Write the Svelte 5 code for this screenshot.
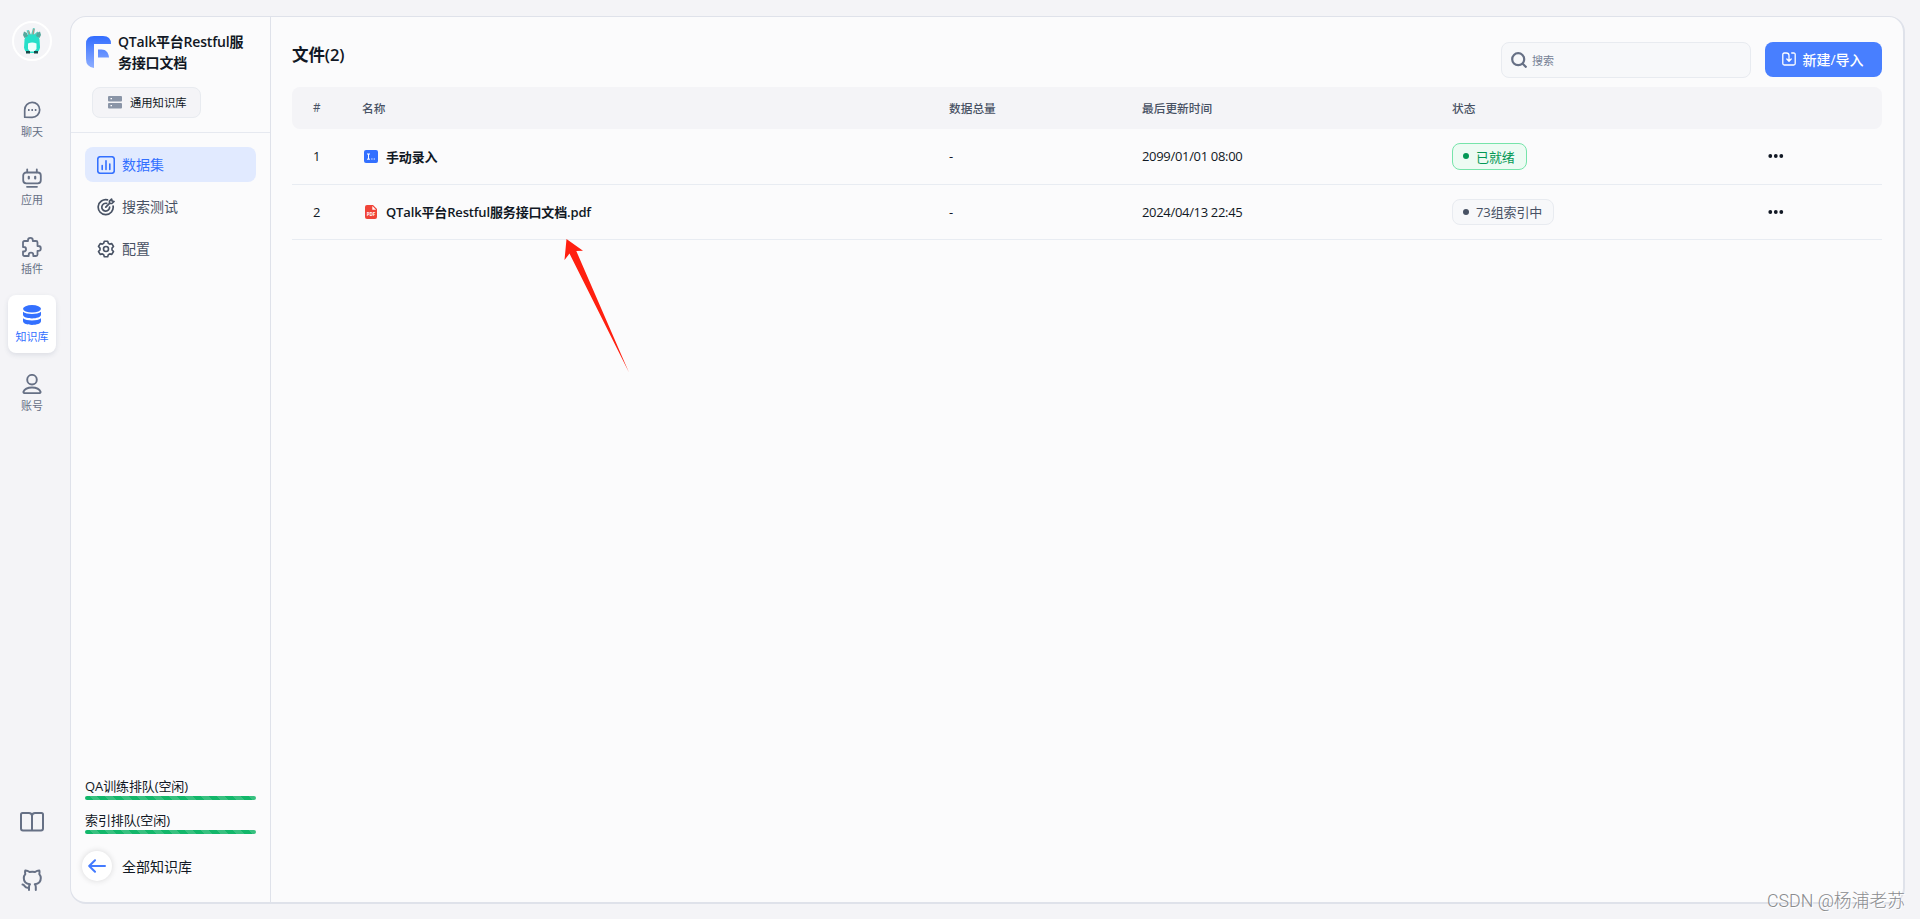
<script lang="ts">
    const navs = [
        { name: "聊天", icon: "chat" },
        { name: "应用", icon: "app" },
        { name: "插件", icon: "plugin" },
        { name: "知识库", icon: "dataset", active: true },
        { name: "账号", icon: "me" },
    ];

    const tabs = [
        { name: "数据集", icon: "chart", active: true },
        { name: "搜索测试", icon: "target" },
        { name: "配置", icon: "gear" },
    ];

    const queues = ["QA训练排队(空闲)", "索引排队(空闲)"];

    const files = [
        { name: "手动录入", type: "manual", total: "-", time: "2099/01/01 08:00", status: "已就绪", ready: true },
        { name: "QTalk平台Restful服务接口文档.pdf", type: "pdf", total: "-", time: "2024/04/13 22:45", status: "73组索引中", ready: false },
    ];
</script>

<div class="page">
    <nav class="rail">
        <div class="avatar">
            <svg viewBox="0 0 20 28" width="20" height="28">
                <path d="M7 10 4.500 3.500 7 3l2 5 2-7 2 .5-1 6 3.500-3 1.500 2-3 4.500z" fill="#54cfc0" />
                <path d="m6.500 4 2 5M12 2l-1 6" stroke="#d8806f" stroke-width=".8" />
                <path d="M6 7.500h8q2.500 1 3.500 5l.5 8q-.5 4-4 5.500H6q-3.500-1.500-4-5.500l.5-8q1-4 3.500-5z" fill="#27dfc9" />
                <path d="M2 4.500l3 1.500 1 3-3.500 2L1 8zM18 4.500 15 6l-1 3 3.500 2L19 8z" fill="#55a89d" />
                <path d="M6 16.500q4-2 8.500 0V22L12 24.500H8L6 22z" fill="#edfffc" />
                <path d="M4 24h4v2.500H4zM12 24h4v2.500h-4z" fill="#164a49" />
            </svg>
        </div>

        {#each navs as item}
            <div class="nav" class:active={item.active}>
                {#if item.icon === "chat"}
                    <svg viewBox="0 0 20 20" width="20" height="20" fill="none" stroke="currentColor" stroke-width="1.700">
                        <path d="M2.700 17.200V10a7.500 7.500 0 1 1 7.500 7.300z" stroke-linejoin="round" />
                        <path d="M6 10h1.600M9.400 10H11M12.800 10h1.600" stroke-width="1.800" />
                    </svg>
                {:else if item.icon === "app"}
                    <svg viewBox="0 0 20 20" width="20" height="20" fill="none" stroke="currentColor" stroke-width="1.800" stroke-linecap="round">
                        <rect x="1.200" y="4.500" width="17.600" height="10.800" rx="3" />
                        <path d="M5.200 1.300v3M14.800 1.300v3M5 18.800h10" />
                        <path d="M6.800 8.800v1.600M13.200 8.800v1.600" stroke-width="2.200" />
                    </svg>
                {:else if item.icon === "plugin"}
                    <svg viewBox="0 0 20 20" width="20" height="20" fill="none" stroke="currentColor" stroke-width="1.800" stroke-linejoin="round">
                        <path d="M1 5.500q0-1.500 1.500-1.500H6v-.7a2.400 2.400 0 0 1 4.800 0V4H14q1.500 0 1.500 1.500V9h.9a2.400 2.400 0 0 1 0 4.800h-.9v3.700q0 1.500-1.500 1.500h-2.700v-1a2.300 2.300 0 0 0-4.600 0v1H2.500Q1 19 1 17.500v-3h.8a2.200 2.200 0 0 0 0-4.500H1z" />
                    </svg>
                {:else if item.icon === "dataset"}
                    <svg viewBox="0 0 20 20" width="20" height="20" fill="currentColor">
                        <ellipse cx="10" cy="3.800" rx="9" ry="3.700" />
                        <path d="M1 6.800c3.500 3 14.500 3 18 0v2.800c0 5.200-18 5.200-18 0z" />
                        <path d="M1 13.200c3.500 3 14.500 3 18 0v2.900c0 5.200-18 5.200-18 0z" />
                    </svg>
                {:else}
                    <svg viewBox="0 0 20 20" width="20" height="20" fill="none" stroke="currentColor" stroke-width="1.900">
                        <circle cx="10" cy="5.700" r="4.800" />
                        <path d="M2.700 19.100c-1 0-1.400-.6-1.200-1.400 2.200-5.700 14.800-5.700 17 0 .2.800-.2 1.400-1.200 1.400z" />
                    </svg>
                {/if}
                <span>{item.name}</span>
            </div>
        {/each}

        <div class="links">
            <svg viewBox="0 0 24 20" width="24" height="20" fill="none" stroke="currentColor" stroke-width="2" stroke-linejoin="round">
                <path d="M12 3.500Q11.500 1 9 1H2.500Q1 1 1 2.500v14Q1 18.500 3 18.500h18q2 0 2-2v-14Q23 1 21.500 1H15q-2.500 0-3 2.500zV18" />
            </svg>
            <svg viewBox="0 0 22 22" width="22" height="22" fill="none" stroke="currentColor" stroke-width="2" stroke-linecap="round" stroke-linejoin="round">
                <path d="M1.500 15.500c2.500.3 2 3.300 5 3.300M8 21v-3c0-1.200.3-2 1-2.700-4-.4-6.200-2.400-6.200-6.200 0-1.600.5-2.900 1.500-4-.4-1.200-.4-2.400 0-3.700 1.500-.1 3 .6 4.300 1.600 1.800-.4 3.700-.4 5.400 0 1.400-1 2.800-1.700 4.300-1.600.4 1.300.4 2.500 0 3.700 1 1.100 1.500 2.400 1.500 4 0 3.800-2.200 5.800-6 6.200.7.700 1 1.500 1 2.700v3" />
            </svg>
        </div>
    </nav>

    <div class="panel">
        <aside>
            <div class="head">
                <div class="title">
                    <svg viewBox="0 0 26 32" width="26" height="32">
                        <defs>
                            <linearGradient id="logo" gradientUnits="userSpaceOnUse" x1="0" y1="0" x2="0" y2="32">
                                <stop offset="0" stop-color="#326dff" />
                                <stop offset="1" stop-color="#8eaeff" />
                            </linearGradient>
                        </defs>
                        <path d="M8 0h9q8 0 8 8H8v24q-8-1-8-9V8q0-8 8-8z" fill="url(#logo)" />
                        <path d="M12 13.500h3.500c4.500 0 7 3 7.500 8H12z" fill="url(#logo)" />
                    </svg>
                    <h1>QTalk平台Restful服务接口文档</h1>
                </div>
                <div class="kind">
                    <svg viewBox="0 0 14 13" width="14" height="13">
                        <rect width="14" height="5.500" rx="1" fill="#8a95a7" />
                        <rect y="7" width="14" height="5.500" rx="1" fill="#8a95a7" />
                        <path d="M2.500 2.700H4M2.500 9.700H4" stroke="#fff" stroke-width="1.300" />
                    </svg>
                    通用知识库
                </div>
            </div>

            <div class="tabs">
                {#each tabs as tab}
                    <div class="tab" class:active={tab.active}>
                        {#if tab.icon === "chart"}
                            <svg viewBox="0 0 18 18" width="18" height="18" fill="none" stroke="currentColor" stroke-width="1.600" stroke-linecap="round">
                                <rect x=".75" y=".75" width="16.500" height="16.500" rx="2.500" />
                                <path d="M5.200 9.500v4M9 4.800v8.700M12.800 8v5.500" />
                            </svg>
                        {:else if tab.icon === "target"}
                            <svg viewBox="0 0 18 18" width="18" height="18" fill="none" stroke="currentColor" stroke-width="1.700" stroke-linecap="round" stroke-linejoin="round">
                                <path d="M10.500 1.900A7.500 7.500 0 1 0 16.100 8" />
                                <path d="M9.700 5.400A3.900 3.900 0 1 0 12.600 9" />
                                <path d="m8.800 9.200 4-4M12.500 5.400V3.200l2.100-2.100.5 1.900 1.900.5L14.900 5.500z" />
                            </svg>
                        {:else}
                            <svg viewBox="0 0 18 18" width="18" height="18" fill="none" stroke="currentColor" stroke-width="1.600" stroke-linejoin="round">
                                <path d="m7.300 1.200h3.400l.6 2.100 1.400.8 2.100-.5 1.700 2.900-1.500 1.600v1.800l1.500 1.600-1.700 2.900-2.100-.5-1.400.8-.6 2.100H7.300l-.6-2.100-1.400-.8-2.100.5-1.700-2.900L3 9.900V8.100L1.500 6.500l1.700-2.900 2.100.5 1.400-.8z" />
                                <circle cx="9" cy="9" r="2.500" />
                            </svg>
                        {/if}
                        <span>{tab.name}</span>
                    </div>
                {/each}
            </div>

            <div class="bottom">
                {#each queues as queue}
                    <div class="queue">
                        <span>{queue}</span>
                        <div class="bar"></div>
                    </div>
                {/each}
                <div class="back">
                    <div class="circle">
                        <svg viewBox="0 0 18 14" width="18" height="14" fill="none" stroke="#447bff" stroke-width="2" stroke-linecap="round" stroke-linejoin="round">
                            <path d="M17 7H1.500M7 1.200 1.200 7 7 12.800" />
                        </svg>
                    </div>
                    全部知识库
                </div>
            </div>
        </aside>

        <main>
            <div class="toolbar">
                <h2>文件(2)</h2>
                <div class="search">
                    <svg viewBox="0 0 16 16" width="16" height="16" fill="none" stroke="#667085" stroke-width="2.200">
                        <circle cx="7.200" cy="7.200" r="6" />
                        <path d="m11.500 11.500 4 4" />
                    </svg>
                    搜索
                </div>
                <button>
                    <svg viewBox="0 0 14 14" width="14" height="14" fill="none" stroke="#fff" stroke-width="1.300" stroke-linecap="round" stroke-linejoin="round">
                        <path d="M4.300 1h-2Q.8 1 .8 2.500v9Q.8 13 2.300 13h9.400q1.500 0 1.500-1.500v-9Q13.200 1 11.700 1h-2M4.300 1Q7 1 7 3.500v5.300M4.800 7 7 9.200 9.200 7" />
                    </svg>
                    <span>新建/导入</span>
                </button>
            </div>

            <div class="row thead">
                <span class="no">#</span>
                <span>名称</span>
                <span>数据总量</span>
                <span>最后更新时间</span>
                <span>状态</span>
            </div>
            {#each files as file, i}
                <div class="row">
                    <span class="no">{i + 1}</span>
                    <span class="file">
                        {#if file.type === "manual"}
                            <svg viewBox="0 0 14 13" width="14" height="13">
                                <rect width="14" height="13" rx="2" fill="#3370ff" />
                                <path d="M3 4h3M3 9.200h3M4.500 4v5M7.300 9h1.200M9.700 9h1.200" stroke="#fff" stroke-width="1" />
                            </svg>
                        {:else}
                            <svg viewBox="0 0 14 14" width="14" height="14">
                                <path d="M3 0h6l4 4v8q0 2-2 2H3q-2 0-2-2V2q0-2 2-2z" fill="#f04438" />
                                <path d="M8.300 1v3.700H12z" fill="#fff" />
                                <text x="7" y="10.800" text-anchor="middle">PDF</text>
                            </svg>
                        {/if}
                        {file.name}
                    </span>
                    <span>{file.total}</span>
                    <span class="time">{file.time}</span>
                    <span><span class="status" class:ready={file.ready}>{file.status}</span></span>
                    <svg viewBox="0 0 16 4" width="16" height="4" fill="#111824">
                        <circle cx="2.300" cy="2" r="1.900" />
                        <circle cx="7.800" cy="2" r="1.900" />
                        <circle cx="13.300" cy="2" r="1.900" />
                    </svg>
                </div>
            {/each}
        </main>
    </div>

    <svg class="arrow" viewBox="0 0 66 134" width="66" height="134">
        <path d="M2.500 0 19 11.800l-6.700.2L65 133.500 5.500 14.600.5 21z" fill="#ff2010" />
    </svg>
    <div class="watermark">CSDN @杨浦老苏</div>
</div>

<style>
    :global(body) {
        background: #f4f4f7;
    }

    .page {
        box-sizing: border-box;
        position: relative;
        display: flex;
        width: 1920px;
        height: 919px;
        padding: 16px 15px 15px 0;
        overflow: hidden;
        color: #111824;
        font-family: "Open Sans", "Noto Sans CJK SC", sans-serif;
        font-size: 13px;
    }

    svg {
        flex-shrink: 0;
    }

    h1, h2 {
        margin: 0;
        font-weight: 600;
    }

    .rail {
        display: flex;
        flex-direction: column;
        align-items: center;
        gap: 10px;
        width: 64px;
        padding-top: 5px;
        margin-right: 6px;
        color: #667085;
    }

    .avatar {
        box-sizing: border-box;
        display: flex;
        align-items: center;
        justify-content: center;
        width: 40px;
        height: 40px;
        margin-bottom: 18px;
        border: 2px solid #fff;
        border-radius: 50%;
    }

    .nav {
        box-sizing: border-box;
        display: flex;
        flex-direction: column;
        align-items: center;
        width: 48px;
        height: 58.500px;
        padding-top: 10.500px;
        border-radius: 8px;
        font-size: 11px;
        line-height: 16px;
    }

    .nav span {
        margin-top: 4px;
    }

    .nav.active {
        background: #fff;
        color: #3370ff;
        box-shadow: 0 2px 5px rgba(50, 65, 100, .12);
    }

    .links {
        display: flex;
        flex-direction: column;
        align-items: center;
        gap: 37px;
        margin-top: auto;
        margin-bottom: 13px;
    }

    .panel {
        box-sizing: border-box;
        display: flex;
        flex: 1;
        border: 1px solid #dfe2ea;
        border-width: 1px 2px 2px 1px;
        border-radius: 16px;
        background: #fbfbfc;
    }

    aside {
        box-sizing: border-box;
        display: flex;
        flex-direction: column;
        width: 200px;
        border-right: 1px solid #dfe2ea;
    }

    .head {
        box-sizing: border-box;
        height: 116px;
        padding: 14px 14px 0 15px;
        border-bottom: 1px solid #e6e9f0;
    }

    .title {
        display: flex;
        align-items: center;
        gap: 6px;
    }

    h1 {
        width: 128px;
        font-size: 14px;
        line-height: 21px;
        letter-spacing: -.2px;
    }

    .kind {
        box-sizing: border-box;
        display: flex;
        align-items: center;
        gap: 8px;
        width: 109px;
        height: 31px;
        margin: 14px 0 0 6px;
        padding-left: 15px;
        padding-bottom: 1px;
        border: 1px solid #e8ebf0;
        border-radius: 8px;
        background: #f4f4f7;
        font-size: 11.300px;
    }

    .tabs {
        display: flex;
        flex-direction: column;
        gap: 7px;
        padding: 14px;
    }

    .tab {
        display: flex;
        align-items: center;
        gap: 7px;
        height: 35px;
        padding-left: 12px;
        border-radius: 8px;
        color: #485264;
        font-size: 14px;
    }

    .tab span {
        padding-bottom: 2px;
    }

    .tab.active {
        background: #e1eaff;
        color: #3370ff;
    }

    .bottom {
        margin-top: auto;
        padding: 0 14px 21px;
    }

    .queue {
        margin-bottom: 12px;
        line-height: 18px;
        letter-spacing: -.1px;
    }

    .queue span {
        display: block;
        margin-top: -1px;
        padding-bottom: 1px;
    }

    .bar {
        height: 4px;
        border-radius: 2px;
        background: repeating-linear-gradient(45deg, #12b76a 0 5.660px, #38c180 5.660px 11.310px);
    }

    .back {
        display: flex;
        align-items: center;
        gap: 10px;
        margin: 17px 0 0 -3px;
        font-size: 14px;
    }

    .circle {
        display: flex;
        align-items: center;
        justify-content: center;
        width: 30px;
        height: 30px;
        border-radius: 50%;
        background: #fff;
        box-shadow: 0 0 6px rgba(0, 0, 0, .14);
    }

    main {
        flex: 1;
        padding: 25px 21px 0 21px;
    }

    .toolbar {
        display: flex;
        height: 45px;
    }

    h2 {
        margin-right: auto;
        font-size: 16.500px;
        line-height: 25px;
        letter-spacing: -.1px;
    }

    .search {
        box-sizing: border-box;
        display: flex;
        align-items: center;
        gap: 5px;
        width: 250px;
        height: 36px;
        margin-right: 14px;
        padding-left: 9px;
        border: 1px solid #e8ebf0;
        border-radius: 8px;
        background: #f7f8fa;
        color: #758195;
        font-size: 11px;
    }

    button {
        display: flex;
        align-items: center;
        justify-content: center;
        gap: 6px;
        width: 117px;
        height: 35px;
        padding: 0 1px 1px 0;
        border: 0;
        border-radius: 8px;
        background: #487fff;
        color: #fff;
        font: 500 14px "Open Sans", "Noto Sans CJK SC", sans-serif;
    }

    .row {
        box-sizing: border-box;
        display: grid;
        grid-template-columns: 70px 587px 193px 310px 1fr 114px;
        align-items: center;
        height: 55.500px;
        border-bottom: 1px solid #e8ecf2;
    }

    .thead {
        height: 42px;
        padding-bottom: 2px;
        border: 0;
        border-radius: 8px;
        background: #f4f4f7;
        color: #485264;
        font-size: 11.700px;
        font-weight: 500;
    }

    .no {
        padding-left: 21px;
    }

    .file {
        display: flex;
        align-items: center;
        gap: 8px;
        padding-left: 2px;
        font-weight: 600;
        letter-spacing: -.15px;
    }

    .file text {
        fill: #fff;
        font: bold 4.500px "Open Sans", sans-serif;
        letter-spacing: 0;
    }

    .time {
        letter-spacing: -.320px;
    }

    .status {
        box-sizing: border-box;
        display: inline-flex;
        align-items: center;
        gap: 7px;
        height: 26px;
        padding: 0 11px 0 10px;
        border: 1px solid #e8ebf0;
        border-radius: 8px;
        background: #f7f8fa;
        color: #485264;
        letter-spacing: -.1px;
    }

    .status::before {
        content: "";
        width: 6px;
        height: 6px;
        border-radius: 50%;
        background: currentColor;
    }

    .status.ready {
        height: 27px;
        border-color: #76e4aa;
        background: #edfbf3;
        color: #039855;
    }

    .arrow {
        position: absolute;
        left: 564px;
        top: 239px;
    }

    .watermark {
        position: absolute;
        right: 15px;
        bottom: 5px;
        color: #8a8b8e;
        font: 300 17.800px/26px Roboto, "Noto Sans CJK SC", sans-serif;
        text-shadow: 1px 1px 0 #fff;
    }
</style>
